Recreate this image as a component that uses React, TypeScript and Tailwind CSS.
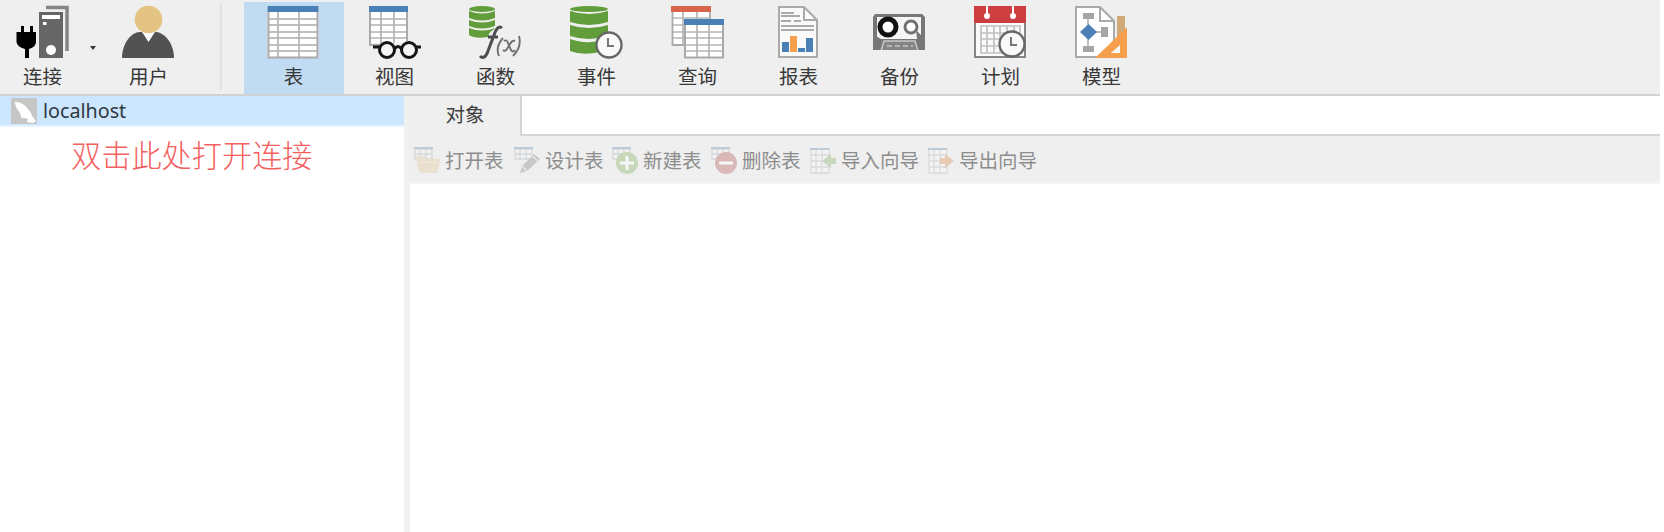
import type { ReactNode } from 'react';

const cjk = "font-['Noto_Sans','Noto_Sans_CJK_SC',sans-serif]";

function Icon({ children }: { children: ReactNode }) {
  return (
    <svg width="54" height="54" viewBox="0 0 54 54" className="block shrink-0">
      {children}
    </svg>
  );
}

function ServerIcon() {
  return (
    <Icon>
      <path d="M31 2.500H52V46" fill="none" stroke="#858585" strokeWidth="3.500" />
      <path d="M24 7H48V53H24Z" fill="#666" />
      <path d="M27 10H45V14H27Z" fill="#fff" />
      <path d="M28 17H31.500V20H28Z" fill="#fff" />
      <circle cx="36" cy="45" r="5" fill="#fff" />
      <path d="M6 21H9V27H15V21H18V27H21V37Q21 42 14 44V53H10V44Q2 42 1.500 37V27H6Z" fill="#000" />
    </Icon>
  );
}

function UserIcon() {
  return (
    <Icon>
      <path d="M1 53C1 39 10 27 19 27H35C45 28 53 40 53 53Z" fill="#525252" />
      <path d="M21 27H34L27.500 37Z" fill="#fff" />
      <circle cx="27.500" cy="14.500" r="13.800" fill="#e4c483" />
    </Icon>
  );
}

function TableIcon() {
  return (
    <Icon>
      <path d="M1.500 1H52.500V53H1.500Z" fill="#fff" />
      <path d="M2 14H52M2 20H52M2 27H52M2 33H52M2 40H52M2 46H52" stroke="#aaa" strokeWidth="1.700" />
      <path d="M12 7V53M33 7V53" stroke="#b5b5b5" strokeWidth="1.700" />
      <path d="M2.500 6V52.500H51.500V6" fill="none" stroke="#aaa" strokeWidth="2" />
      <path d="M1.500 1H52.500V7H1.500Z" fill="#4b80b6" />
    </Icon>
  );
}

function ViewIcon() {
  return (
    <Icon>
      <path d="M2 1H41V38H2Z" fill="#fff" />
      <path d="M2 14H41M2 20H41M2 27H41M2 33H41M14 7V38M27 7V38" stroke="#b3b3b3" strokeWidth="1.700" />
      <path d="M3 6V40H14M40 6V36" fill="none" stroke="#aaa" strokeWidth="2" />
      <path d="M2 1H41V7H2Z" fill="#4b80b6" />
      <g fill="#f5f5f5" stroke="#161616" strokeWidth="3">
        <circle cx="20" cy="45" r="7.500" />
        <circle cx="42" cy="45" r="7.500" />
        <path d="M27.500 44Q31 39 34.500 44M6 42H13M48 42H54" fill="none" />
      </g>
    </Icon>
  );
}

function FunctionIcon() {
  return (
    <Icon>
      <g fill="#629d3c">
        <ellipse cx="14" cy="4" rx="13" ry="3" />
        <path d="M1 6Q14 11 27 6V13Q14 18 1 13ZM1 15Q14 20 27 15V21Q14 26 1 21ZM1 23Q14 28 27 23L25 25Q21 27 20 32Q7 34 1 30Z" />
      </g>
      <path d="M34 23C31 20 28 24 26 30L20 46C18 52 15 54 12 51M20 32H30" fill="none" stroke="#4e4e4e" strokeWidth="3" />
      <path d="M35 33Q27 42 31 51M51 31Q54 42 45 51M36 36Q39 34 40 38L43 45Q45 48 47 45M47 36Q44 35 42 39L39 44Q37 47 35 45" fill="none" stroke="#707070" strokeWidth="1.900" />
    </Icon>
  );
}

function Clock({ cx, cy }: { cx: number; cy: number }) {
  return (
    <>
      <circle cx={cx} cy={cy} r="12.500" fill="#fafafa" stroke="#666" strokeWidth="2.300" />
      <path d={`M${cx - 1} ${cy - 7}V${cy + 1}H${cx + 5}`} fill="none" stroke="#777" strokeWidth="2" />
    </>
  );
}

function EventIcon() {
  return (
    <Icon>
      <g fill="#629d3c">
        <ellipse cx="20" cy="4" rx="19" ry="3" />
        <path d="M1 6Q20 12 39 6V17Q20 23 1 17ZM1 20Q20 26 39 20V31Q20 37 1 31ZM1 34Q14 39 31 36V47Q14 51 1 46Z" />
      </g>
      <Clock cx={40} cy={40} />
    </Icon>
  );
}

function QueryIcon() {
  return (
    <Icon>
      <path d="M2 1H40V40H2Z" fill="#fff" />
      <path d="M2 13H40M2 20H15M2 27H15M2 33H15M13 7V39M27 7V14" stroke="#b5b5b5" strokeWidth="1.700" />
      <path d="M2.500 6V40H15M40 6V14" stroke="#aaa" fill="none" strokeWidth="1.800" />
      <path d="M1 1H41V7H1Z" fill="#d76549" />
      <path d="M15 14H53V53H15Z" fill="#fff" />
      <path d="M15 27H53M15 33H53M15 40H53M15 46H53M27 20V53M39 20V53" stroke="#b5b5b5" strokeWidth="1.700" />
      <path d="M15 20V52.500H53V20" fill="none" stroke="#aaa" strokeWidth="2" />
      <path d="M14 14H54V20H14Z" fill="#4b80b6" />
    </Icon>
  );
}

function ReportIcon() {
  return (
    <Icon>
      <path d="M8 2H33L46 15V52H8Z" fill="#fafafa" stroke="#aaa" strokeWidth="2" />
      <path d="M33 2V15H46" fill="none" stroke="#aaa" strokeWidth="2" />
      <path d="M10 8H23M10 11H29M10 16H20M23 16H30M10 21H43M10 25H43" stroke="#aaa" strokeWidth="2" />
      <path d="M11 37H18V47H11ZM27 43H34V47H27ZM35 33H42V47H35Z" fill="#4b80b6" />
      <path d="M19 31H26V47H19Z" fill="#f6a04d" />
    </Icon>
  );
}

function BackupIcon() {
  return (
    <Icon>
      <path d="M3 9H50L53 12V45H1V12Z" fill="#777" />
      <path d="M5 12H49V34H5Z" fill="#f5f5f5" />
      <circle cx="16" cy="22" r="8" fill="#fff" stroke="#111" strokeWidth="5" />
      <circle cx="39" cy="22" r="6" fill="#fff" stroke="#707070" strokeWidth="3" />
      <path d="M44 25L50 31V35H4V31L9 34H45Z" fill="#777" />
      <path d="M9 46L12 36H43L46 46" fill="#858585" stroke="#c8c8c8" strokeWidth="1.500" />
      <path d="M15 41H41" stroke="#c5c5c5" strokeDasharray="5 3" strokeWidth="1.500" />
      <path d="M0 45H54V48H0Z" fill="#efefef" />
    </Icon>
  );
}

function ScheduleIcon() {
  return (
    <Icon>
      <path d="M2 2H52V52H2Z" fill="#fafafa" stroke="#858585" strokeWidth="2" />
      <path d="M8 21H47V48H8ZM14 21V48M21 21V48M27 21V48M34 21V48M41 21V48M8 28H47M8 34H47M8 41H47" fill="none" stroke="#c0c0c0" strokeWidth="1.700" />
      <path d="M1 1H53V18H1Z" fill="#cc3e40" />
      <path d="M14 1V11M40 1V11" stroke="#fff" strokeWidth="2" />
      <circle cx="14" cy="11" r="3" fill="#fff" />
      <circle cx="40" cy="11" r="3" fill="#fff" />
      <Clock cx={39} cy={39} />
    </Icon>
  );
}

function ModelIcon() {
  return (
    <Icon>
      <path d="M2 2H26L40 16V52H2Z" fill="#fff" stroke="#aaa" strokeWidth="2" />
      <path d="M26 2V16H40" fill="none" stroke="#aaa" strokeWidth="2" />
      <path d="M14 11V45M14 27H32" stroke="#aaa" strokeWidth="1.500" />
      <path d="M9 8H20V14H9ZM9 41H20V47H9ZM27 22H34V32H27Z" fill="#a5a5a5" />
      <path d="M14.500 19L23 27L14.500 35L6 27Z" fill="#4b80b6" />
      <path d="M43 11H51V42H43Z" fill="#cfaa78" />
      <path d="M53 22V53H21Z" fill="#f6a04d" />
      <path d="M46 40L37 48H46Z" fill="#f7f7f7" />
    </Icon>
  );
}

function ToolButton({ icon, label, active = false }: { icon: ReactNode; label: string; active?: boolean }) {
  return (
    <button className={`flex h-[92px] w-[100px] flex-col items-center pt-[3px] pr-[2px] ${active ? 'bg-[#c0dbf2]' : ''}`}>
      {icon}
      <span className="mt-[3px] pl-[1px] text-[19.5px] leading-[30px] text-[#383838]">{label}</span>
    </button>
  );
}

function MiniTable({ tall = false }: { tall?: boolean }) {
  return tall ? (
    <>
      <path d="M2 2H20V26H2ZM7 2V26M13 2V26M2 8H20M2 14H20M2 20H20" fill="#f3f3f3" stroke="#dadada" strokeWidth="1.300" />
      <path d="M1 1H20V3H1Z" fill="#bdcad8" />
    </>
  ) : (
    <>
      <path d="M2 2H19V12H2ZM7 3V12M13 3V12M2 7H19" fill="#f2f2f2" stroke="#d4d7da" strokeWidth="1.300" />
      <path d="M1 0H20V2H1Z" fill="#bdcad8" />
    </>
  );
}

function Action({ label, width, children }: { label: string; width: string; children: ReactNode }) {
  return (
    <button className={`flex h-full shrink-0 items-center pt-[4px] ${width}`}>
      <svg width="28" height="28" viewBox="0 0 28 28" className="shrink-0">{children}</svg>
      <span className="ml-[4px] text-[19.5px] leading-[30px] whitespace-nowrap text-[#8d8d8d]">{label}</span>
    </button>
  );
}

export default function App() {
  return (
    <div className={`flex h-[532px] w-[1660px] flex-col overflow-hidden bg-white ${cjk}`}>
      <header className="flex h-[96px] shrink-0 border-b-2 border-[#d2d2d2] bg-[#efefef] pt-[2px]">
        <div className="-ml-[7px] flex w-[107px] items-center">
          <ToolButton label="连接" icon={<ServerIcon />} />
        </div>
        <svg width="6" height="4" viewBox="0 0 6 4" className="mt-[44px] -ml-[10px] shrink-0"><path d="M0 0H6L3 4Z" fill="#333" /></svg>
        <div className="mr-[-1px] ml-[3px]"><ToolButton label="用户" icon={<UserIcon />} /></div>
        <div className="ml-[22px] h-[88px] w-[2px] bg-[#e2e2e2]" />
        <nav className="ml-[22px] flex gap-[1px]">
          <ToolButton active label="表" icon={<TableIcon />} />
          <ToolButton label="视图" icon={<ViewIcon />} />
          <ToolButton label="函数" icon={<FunctionIcon />} />
          <ToolButton label="事件" icon={<EventIcon />} />
          <ToolButton label="查询" icon={<QueryIcon />} />
          <ToolButton label="报表" icon={<ReportIcon />} />
          <ToolButton label="备份" icon={<BackupIcon />} />
          <ToolButton label="计划" icon={<ScheduleIcon />} />
          <ToolButton label="模型" icon={<ModelIcon />} />
        </nav>
      </header>
      <div className="flex min-h-0 grow">
        <aside className="w-[404px] shrink-0 bg-white">
          <div className="flex h-[31px] items-center border-b-2 border-[#e5f2ff] bg-[#cce6ff] pl-[11px]">
            <svg width="26" height="26" viewBox="0 0 27 27"><path d="M0 0H27V27H0Z" fill="#c6c6c6" /><path d="M4 4Q14 5 18 12Q21 15 22 19L26 24L23 26L16 25L18 22Q13 20 11 21L9 15Q4 9 4 4Z" fill="#fff" /></svg>
            <span className="ml-[6px] text-[19.7px] leading-[28px] text-[#303940] font-['Noto_Sans',sans-serif]">localhost</span>
          </div>
          <p className="mt-[7px] ml-[71px] text-[30.2px] leading-[44px] font-light text-[#f46060]">双击此处打开连接</p>
        </aside>
        <div className="w-[6px] shrink-0 bg-[#f0f0f0]" />
        <main className="flex min-w-0 grow flex-col">
          <div className="flex h-[40px] shrink-0 bg-[#efefef]">
            <button className="w-[110px] pb-[2px] text-[19.5px] leading-[26px] text-[#3e3e3e]">对象</button>
            <div className="grow border-b-2 border-l-2 border-[#d5d5d5] bg-white" />
          </div>
          <div className="flex h-[48px] shrink-0 border-b-2 border-[#f4f4f4] bg-[#efefef] pl-[3px]">
            <Action label="打开表" width="w-[100px]">
              <MiniTable /><path d="M3 9H11L14 12H27V15L24 26H8L5 22Z" fill="#eae0ce" /><path d="M4 15H28" stroke="#f0e9dd" />
            </Action>
            <Action label="设计表" width="w-[98px]">
              <MiniTable /><path d="M7 26L9 19L21 7L27 12L14 24Z" fill="#c8c8c8" /><path d="M9 19L14 24M19 9L25 14" stroke="#e5e5e5" strokeWidth="1.500" />
            </Action>
            <Action label="新建表" width="w-[99px]">
              <MiniTable /><circle cx="16" cy="16" r="11" fill="#c7d7b8" /><path d="M16 9V23M9 16H23" stroke="#f7f7f7" strokeWidth="3" />
            </Action>
            <Action label="删除表" width="w-[99px]">
              <MiniTable /><circle cx="16" cy="16" r="11" fill="#d9b8b8" /><path d="M9 16H23" stroke="#f7f7f7" strokeWidth="3" />
            </Action>
            <Action label="导入向导" width="w-[118px]">
              <MiniTable tall /><path d="M27 11V17H22V21L13 14L22 7V11Z" fill="#c8d7bd" />
            </Action>
            <Action label="导出向导" width="w-[120px]">
              <MiniTable tall /><path d="M13 11H18V7L27 14L18 21V17H13Z" fill="#e8cbb5" />
            </Action>
          </div>
          <div className="grow bg-white" />
        </main>
      </div>
    </div>
  );
}
